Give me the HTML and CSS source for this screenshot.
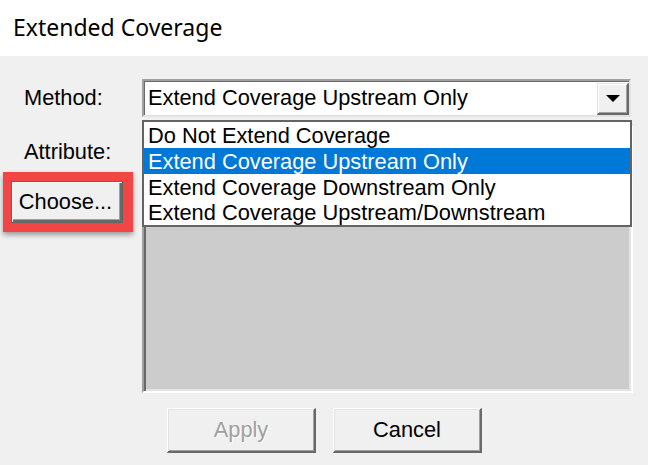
FILE: index.html
```html
<!DOCTYPE html>
<html>
<head>
<meta charset="utf-8">
<link rel="stylesheet" href="styles.css">
</head>
<body>
<div class="titlebar">Extended Coverage</div>
<div class="main">
  <div class="left">
    <div class="label label-method">Method:</div>
    <div class="label label-attr">Attribute:</div>
    <div class="highlight">
      <button class="btn btn-default">Choose...</button>
    </div>
  </div>
  <div class="right">
    <div class="combo">
      <div class="combo-text">Extend Coverage Upstream Only</div>
      <div class="combo-btn">
        <svg width="14" height="8" viewBox="0 0 14 8"><polygon points="0,0 14,0 7,7" fill="#000"/></svg>
      </div>
    </div>
    <div class="dropdown">
      <div class="opt">Do Not Extend Coverage</div>
      <div class="opt selected">Extend Coverage Upstream Only</div>
      <div class="opt">Extend Coverage Downstream Only</div>
      <div class="opt">Extend Coverage Upstream/Downstream</div>
    </div>
    <div class="listbox"></div>
  </div>
</div>
<div class="actions">
  <button class="btn btn-action disabled">Apply</button>
  <button class="btn btn-action">Cancel</button>
</div>
</body>
</html>
```
FILE: styles.css
```css
html, body {
  margin: 0;
  padding: 0;
}
body {
  background: #f0f0f0;
  font-family: "Liberation Sans", Arial, sans-serif;
  font-size: 21.8px;
  color: #000;
  width: 648px;
  height: 465px;
  overflow: hidden;
}
.titlebar {
  height: 56px;
  box-sizing: border-box;
  background: #fff;
  padding-left: 13px;
  padding-top: 11px;
  font-family: "Noto Sans", sans-serif;
  font-size: 23px;
  line-height: 32px;
  color: #000;
}
.main {
  display: flex;
  padding-top: 23px;
}
.left {
  width: 142px;
  flex: none;
}
.label {
  padding-left: 24px;
}
.label-method {
  line-height: 38px;
  height: 38px;
}
.label-attr {
  margin-top: 23px;
  line-height: 24px;
  height: 24px;
}
.highlight {
  margin-top: 8px;
  margin-left: 3px;
  width: 112px;
  padding: 9px 10px 9px 8px;
  background: #f24545;
  box-shadow: 0 3px 5px rgba(0, 0, 0, 0.35);
}
.btn {
  font-family: "Liberation Sans", Arial, sans-serif;
  font-size: 21.8px;
  color: #000;
  background: #f0f0f0;
  box-sizing: border-box;
  padding: 0;
  margin: 0;
  cursor: default;
}
.btn-default {
  display: block;
  width: 112px;
  height: 42px;
  border: 1px solid #646464;
  box-shadow: inset 1px 1px 0 #ffffff, inset -2px -2px 0 #696969, inset -3px -3px 0 #a0a0a0;
  padding-right: 3px;
}
.right {
  position: relative;
  width: 491px;
  flex: none;
}
.combo {
  width: 489px;
  height: 38px;
  box-sizing: border-box;
  background: #fff;
  border-top: 2px solid #a0a0a0;
  border-left: 2px solid #a0a0a0;
  border-right: 2px solid #e3e3e3;
  border-bottom: 2px solid #e3e3e3;
  box-shadow: inset 1px 1px 0 #696969;
  display: flex;
  align-items: center;
}
.combo-text {
  flex: 1;
  padding-left: 4px;
  line-height: 34px;
}
.combo-btn {
  width: 32px;
  height: 32px;
  box-sizing: border-box;
  background: #f0f0f0;
  border-top: 1px solid #e3e3e3;
  border-left: 1px solid #e3e3e3;
  border-right: 2px solid #696969;
  border-bottom: 2px solid #696969;
  box-shadow: inset 1px 1px 0 #fff, inset -1px -1px 0 #a0a0a0;
  display: flex;
  align-items: center;
  justify-content: center;
  align-self: flex-end;
}
.combo-btn svg {
  display: block;
  margin-top: 1px;
}
.dropdown {
  position: absolute;
  left: 0;
  top: 41px;
  width: 490px;
  box-sizing: border-box;
  border: 2px solid #646464;
  background: #fff;
  z-index: 2;
}
.opt {
  height: 25.75px;
  line-height: 27px;
  padding-left: 4px;
  white-space: nowrap;
}
.opt.selected {
  background: #0078d7;
  color: #fff;
}
.listbox {
  margin-top: 7px;
  width: 491px;
  height: 269px;
  box-sizing: border-box;
  background: #cccccc;
  border-top: 2px solid #a0a0a0;
  border-left: 2px solid #a0a0a0;
  border-right: 2px solid #fff;
  border-bottom: 2px solid #fff;
  box-shadow: inset 2px 1px 0 #696969, inset -2px -2px 0 #e3e3e3;
}
.actions {
  display: flex;
  gap: 17px;
  padding-left: 167px;
  margin-top: 15px;
}
.btn-action {
  width: 149px;
  height: 45px;
  border-top: 1px solid #fff;
  border-left: 1px solid #fff;
  border-right: 2px solid #696969;
  border-bottom: 2px solid #696969;
  box-shadow: inset 1px 1px 0 #e3e3e3, inset -1px -1px 0 #a0a0a0;
}
.btn-action.disabled {
  color: #a0a0a0;
  text-shadow: 1px 1px 0 #fff;
}
```
